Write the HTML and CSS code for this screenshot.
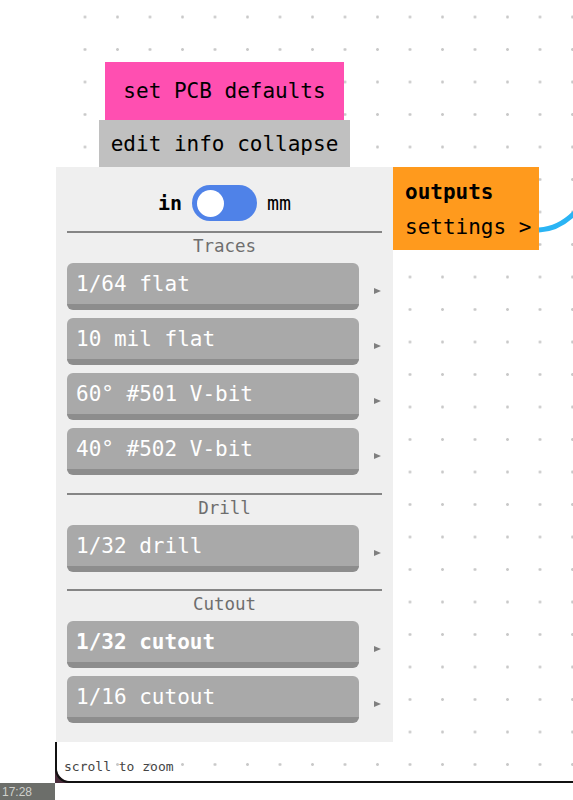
FILE: index.html
```html
<!DOCTYPE html>
<html lang="en">

<head>
  <meta charset="UTF-8" />
  <title>PCB settings</title>
  <link rel="stylesheet" href="styles.css">
</head>

<body>
  <div class="canvas">
    <svg class="wire" width="560" height="783" viewBox="0 0 560 783">
      <path d="M 484 230 Q 507 229 526 206" />
    </svg>

    <div class="node pcb-node">
      <div class="node-title">set PCB defaults</div>
      <div class="node-tabs">edit info collapse</div>

      <div class="panel">
        <div class="units">
          <span class="unit unit-on">in</span>
          <span class="switch"><span class="knob"></span></span>
          <span class="unit">mm</span>
        </div>

        <div class="section">
          <div class="section-title">Traces</div>
          <div class="tool-row"><div class="tool">1/64 flat</div><span class="arrow"></span></div>
          <div class="tool-row"><div class="tool">10 mil flat</div><span class="arrow"></span></div>
          <div class="tool-row"><div class="tool">60° #501 V-bit</div><span class="arrow"></span></div>
          <div class="tool-row"><div class="tool">40° #502 V-bit</div><span class="arrow"></span></div>
        </div>

        <div class="section">
          <div class="section-title">Drill</div>
          <div class="tool-row"><div class="tool">1/32 drill</div><span class="arrow"></span></div>
        </div>

        <div class="section">
          <div class="section-title">Cutout</div>
          <div class="tool-row"><div class="tool tool-selected">1/32 cutout</div><span class="arrow"></span></div>
          <div class="tool-row"><div class="tool">1/16 cutout</div><span class="arrow"></span></div>
        </div>
      </div>
    </div>

    <div class="node outputs-node">
      <div class="outputs-title">outputs</div>
      <div>settings &gt;</div>
    </div>

    <div class="corner"></div>
    <div class="hint">scroll to zoom</div>
  </div>

  <div class="taskbar">
    <div class="clock">17:28</div>
  </div>
</body>

</html>
```

FILE: styles.css
```css
body {
  margin: 0;
  height: 800px;
  overflow: hidden;
  background: #ffffff;
  font-family: "DejaVu Sans Mono", "Liberation Mono", monospace;
}

.canvas {
  position: relative;
  margin-left: 55px;
  height: 783px;
  overflow: hidden;
  background-color: #ffffff;
  background-image: radial-gradient(circle, #c9c9c9 1.1px, transparent 1.7px);
  background-size: 32.5px 32.5px;
  background-position: 13.75px 0.75px;
}

.wire {
  position: absolute;
  left: 0;
  top: 0;
}

.wire path {
  fill: none;
  stroke: #2ab4f4;
  stroke-width: 5;
}

.node {
  position: absolute;
}

/* pcb defaults node */
.pcb-node {
  left: 1px;
  top: 62px;
  width: 337px;
  display: flex;
  flex-direction: column;
  align-items: center;
}

.node-title {
  background: #ff4fb1;
  color: #000;
  font-size: 21px;
  height: 58px;
  line-height: 58px;
  padding: 0 18px;
}

.node-tabs {
  background: #c0c0c0;
  color: #000;
  font-size: 21px;
  height: 47px;
  line-height: 49px;
  padding: 0 12px;
}

.panel {
  align-self: stretch;
  background: #efefef;
  padding: 0 11px 19px;
}

.units {
  display: flex;
  align-items: center;
  justify-content: center;
  gap: 10px;
  padding: 18px 0 10px;
}

.unit {
  font-size: 20px;
  color: #000;
}

.unit-on {
  font-weight: bold;
}

.switch {
  position: relative;
  width: 65px;
  height: 36px;
  border-radius: 18px;
  background: #4f82e8;
}

.knob {
  position: absolute;
  left: 5px;
  top: 4.5px;
  width: 27px;
  height: 27px;
  border-radius: 50%;
  background: #ffffff;
}

.section {
  border-top: 2px solid #858585;
}

.section + .section {
  margin-top: 18px;
}

.section:last-child {
  margin-top: 17px;
}

.section-title {
  text-align: center;
  font-size: 17.5px;
  line-height: 26px;
  color: #6e6e6e;
  margin-bottom: 4px;
}

.tool-row {
  display: flex;
  align-items: center;
}

.tool-row + .tool-row {
  margin-top: 8px;
}

.tool {
  width: 283px;
  height: 41px;
  line-height: 42px;
  padding-left: 9px;
  background: #a9a9a9;
  border-bottom: 6px solid #8d8d8d;
  border-radius: 6px;
  color: #ffffff;
  font-size: 21px;
}

.tool-selected {
  font-weight: bold;
}

.arrow {
  width: 0;
  height: 0;
  margin: 9px 0 0 15px;
  border-left: 7px solid #7f7f7f;
  border-top: 3.5px solid transparent;
  border-bottom: 3.5px solid transparent;
}

/* outputs node */
.outputs-node {
  left: 338px;
  top: 167px;
  width: 146px;
  height: 83px;
  box-sizing: border-box;
  padding: 8px 0 0 12px;
  background: #ff9a1d;
  color: #000;
  font-size: 21px;
  line-height: 35px;
}

.outputs-title {
  font-weight: bold;
}

/* canvas footer */
.corner {
  position: absolute;
  left: 0;
  bottom: 0;
  width: 16px;
  height: 16px;
  background: radial-gradient(circle at 100% 0, transparent 14px, #4a2d3b 15px);
}

.hint {
  position: absolute;
  left: 0;
  right: 0;
  bottom: 0;
  height: 41px;
  box-sizing: border-box;
  padding: 17px 0 0 7px;
  border-left: 2px solid #111;
  border-bottom: 2px solid #111;
  border-bottom-left-radius: 14px;
  font-size: 13px;
  line-height: 16px;
  color: #444;
}

.taskbar {
  height: 17px;
  overflow: hidden;
}

.clock {
  width: 55px;
  height: 17px;
  box-sizing: border-box;
  padding: 3px 0 0 2px;
  background: #6c6e6a;
  color: #cfd0cc;
  font-family: "Liberation Sans", Arial, sans-serif;
  font-size: 12px;
  line-height: 13px;
}
```
